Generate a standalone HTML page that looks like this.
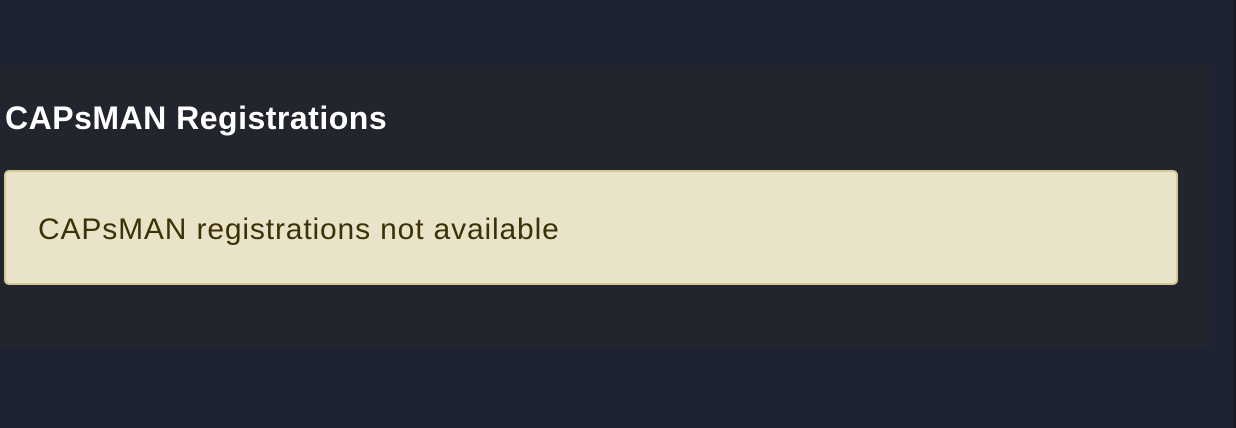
<!DOCTYPE html>
<html><head><style>
html,body{margin:0;padding:0;width:1236px;height:428px;background:#1e2333;overflow:hidden;font-family:"Liberation Sans",sans-serif}
.edge{position:absolute;right:0;top:0;width:3px;height:428px;background:#181c28}
.panel{position:absolute;left:0;top:65px;width:1209px;height:284px;background:#22252d;border-radius:3px}
h2{position:absolute;left:5px;top:98px;margin:0;font-size:32px;font-weight:bold;color:#fff;line-height:40px;letter-spacing:0.5px}
.alert{position:absolute;left:4px;top:170px;width:1170px;height:111px;background:#e9e3c9;border:2px solid #d2c995;border-radius:5px}
.alert span{position:absolute;left:32px;top:39px;font-size:30px;line-height:38px;color:#3d3105;letter-spacing:0.85px}
</style></head><body>
<div class="panel"></div>
<h2>CAPsMAN Registrations</h2>
<div class="alert"><span>CAPsMAN registrations not available</span></div>
<div class="edge"></div>
</body></html>
